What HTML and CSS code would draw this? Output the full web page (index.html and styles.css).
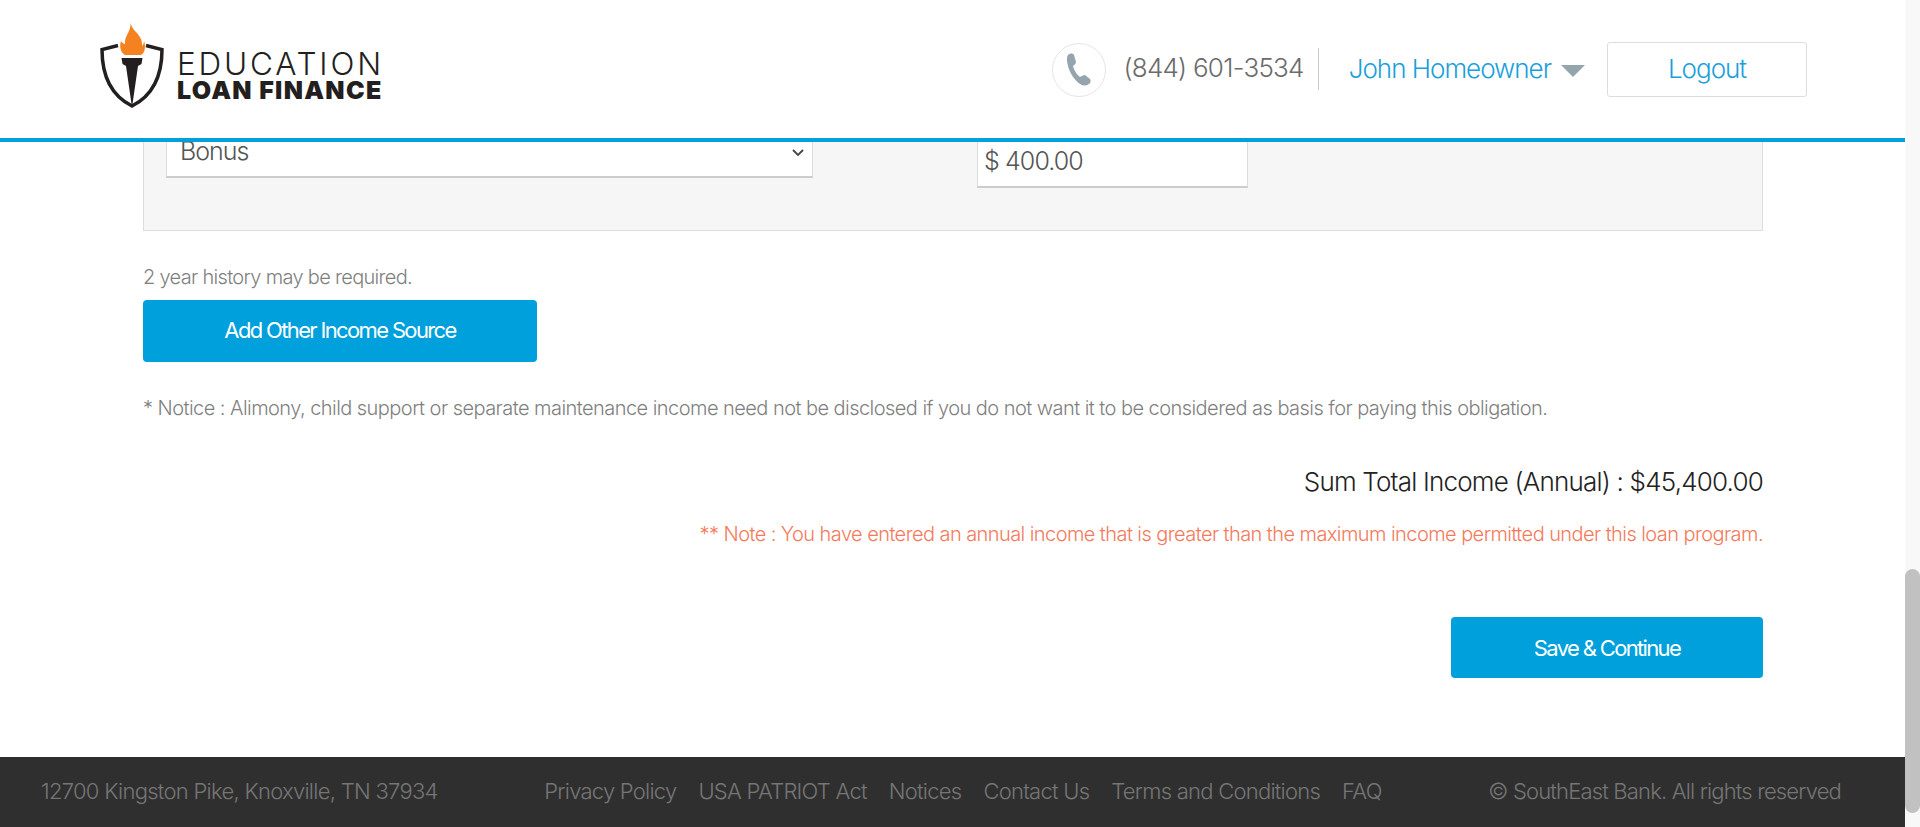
FILE: index.html
```html
<!DOCTYPE html>
<html>
<head>
    <link rel="stylesheet" href="styles.css">
</head>
<body>
    <div class="page">
        <div class="main">
            <div class="header">
                <div class="logo">
                    <svg class="logo-icon" width="65" height="86" viewBox="0 0 65 86">
                        <path d="M18 22.500 L2 26.500 C2 52 10 72 32 83 C54 72 62 52 62 26.500 L46 22.500" fill="none" stroke="#231f20" stroke-width="3.500"/>
                        <path d="M21.500 35 H42.500 L41.500 41 L38 43 L32.500 81 H31.500 L26 43 L22.500 41 Z" fill="#231f20"/>
                        <path d="M30.500 0 C32 7 37 8 41 16 C42 18 42 21 42 23 C43 22 44 20 44 18 C46 23 45 30 41 32 H25 C21 30 19 24 21 18 C22 20 24 21 25 21 C24 13 31 9 30.500 0 Z" fill="#f58220"/>
                    </svg>
                    <div class="logo-text">
                        <div class="logo-top">EDUCATION</div>
                        <div class="logo-bottom">LOAN FINANCE</div>
                    </div>
                </div>
                <div class="header-right">
                    <div class="phone-circle">
                        <svg width="26" height="34" viewBox="0 0 26 34">
                            <path d="M2 2 C4 0 7 0 8 2 L10 9 C10 11 8 12 7 13 C8 17 11 22 14 24 C16 23 17 22 19 22 L24 26 C25 28 25 29 23 31 C20 33 17 33 14 31 C7 26 2 17 1 8 C1 5 1 3 2 2 Z" fill="#95a5ae"/>
                        </svg>
                    </div>
                    <span class="phone">(844) 601-3534</span>
                    <span class="user">John Homeowner</span>
                    <span class="caret"></span>
                    <a class="logout">Logout</a>
                </div>
            </div>

            <div class="content">
                <div class="panel">
                    <div class="select-wrap">
                        <select class="income-type">
                            <option>Bonus</option>
                        </select>
                        <svg class="chevron" width="12" height="8" viewBox="0 0 12 8">
                            <path d="M1 1 L6 6 L11 1" fill="none" stroke="#444" stroke-width="1.800"/>
                        </svg>
                    </div>
                    <input class="amount" type="text" value="$ 400.00">
                </div>

                <p class="hint">2 year history may be required.</p>
                <button class="btn btn-add">Add Other Income Source</button>
                <p class="notice">* Notice : Alimony, child support or separate maintenance income need not be disclosed if you do not want it to be considered as basis for paying this obligation.</p>
                <p class="total">Sum Total Income (Annual) : $45,400.00</p>
                <p class="warning">** Note : You have entered an annual income that is greater than the maximum income permitted under this loan program.</p>
                <div class="actions">
                    <button class="btn btn-save">Save &amp; Continue</button>
                </div>
            </div>

            <div class="footer">
                <span class="address">12700 Kingston Pike, Knoxville, TN 37934</span>
                <div class="footer-links">
                    <a>Privacy Policy</a>
                    <a>USA PATRIOT Act</a>
                    <a>Notices</a>
                    <a>Contact Us</a>
                    <a>Terms and Conditions</a>
                    <a>FAQ</a>
                </div>
                <span class="copyright">© SouthEast Bank. All rights reserved</span>
            </div>
        </div>

        <div class="scrollbar">
            <div class="scroll-thumb"></div>
        </div>
    </div>
</body>
</html>
```

FILE: styles.css
```css
* {
    box-sizing: border-box;
}

html, body {
    height: 100%;
}

body {
    margin: 0;
    font-family: Inter, "Liberation Sans", Arial, sans-serif;
    font-weight: 300;
    color: #777;
    overflow: hidden;
}

p {
    margin: 0;
}

.page {
    display: flex;
    height: 827px;
}

.main {
    position: relative;
    flex: 1;
    display: flex;
    flex-direction: column;
    overflow: hidden;
}

.header {
    position: absolute;
    top: 0;
    left: 0;
    right: 0;
    z-index: 2;
    height: 142px;
    display: flex;
    justify-content: space-between;
    align-items: center;
    padding: 0 98px 0 100px;
    background: #fff;
    border-bottom: 4px solid #00a0dc;
}

.logo {
    display: flex;
    align-items: flex-start;
    height: 86px;
    margin-top: -6px;
}

.logo-text {
    margin-left: 12px;
    padding-top: 26px;
    color: #231f20;
}

.logo-top {
    font-size: 31.500px;
    line-height: 29px;
    font-weight: 300;
    letter-spacing: 2.800px;
}

.logo-bottom {
    font-size: 25px;
    line-height: 25px;
    font-weight: 900;
    letter-spacing: 1.300px;
}

.header-right {
    display: flex;
    align-items: center;
}

.phone-circle {
    width: 54px;
    height: 54px;
    display: flex;
    justify-content: center;
    align-items: center;
    border: 1px solid #e5e5e5;
    border-radius: 50%;
    margin-right: 17px;
    margin-top: 2px;
}

.phone {
    font-size: 26px;
    letter-spacing: -0.750px;
    color: #6b6b6b;
    padding: 0 14px 2px 0;
    line-height: 40px;
    border-right: 1px solid #ccc;
}

.user {
    font-size: 26px;
    letter-spacing: -1px;
    color: #1a9fdc;
    margin-left: 30px;
    padding-bottom: 2px;
}

.caret {
    width: 0;
    height: 0;
    margin-left: 10px;
    margin-top: 3px;
    border-left: 12px solid transparent;
    border-right: 12px solid transparent;
    border-top: 12px solid #95a5ae;
}

.logout {
    width: 200px;
    height: 55px;
    display: flex;
    justify-content: center;
    align-items: center;
    margin-left: 22px;
    padding-bottom: 2px;
    font-size: 26px;
    letter-spacing: -1px;
    color: #1a9fdc;
    border: 1px solid #ddd;
    border-radius: 3px;
}

.content {
    flex: 1;
    padding: 101px 142px 0 143px;
}

.panel {
    display: flex;
    align-items: flex-start;
    gap: 164px;
    height: 130px;
    padding: 29px 22px 0 22px;
    background: #f6f6f6;
    border: 1px solid #ddd;
}

.select-wrap {
    position: relative;
    width: 647px;
}

.income-type {
    display: block;
    width: 100%;
    height: 47px;
    padding: 0 13px 6px;
    appearance: none;
    font-family: inherit;
    font-weight: 300;
    font-size: 25px;
    letter-spacing: -1px;
    color: #555;
    background: #fff;
    border: 1px solid #ddd;
    border-bottom: 2px solid #ccc;
    border-radius: 0;
}

.chevron {
    position: absolute;
    right: 9px;
    top: 18px;
}

.amount {
    width: 271px;
    height: 52px;
    margin-top: 5px;
    padding: 0 6px 2px;
    font-family: inherit;
    font-weight: 300;
    font-size: 25px;
    letter-spacing: -0.900px;
    color: #555;
    background: #fff;
    border: 1px solid #ddd;
    border-bottom: 2px solid #ccc;
}

.hint {
    margin-top: 34px;
    font-size: 20px;
    line-height: 24px;
    letter-spacing: -0.680px;
    color: #7f7f7f;
}

.btn {
    display: block;
    height: 62px;
    font-family: inherit;
    font-weight: 400;
    font-size: 22px;
    letter-spacing: -1.650px;
    color: #fff;
    background: #00a0dc;
    border: none;
    border-radius: 4px;
}

.btn-add {
    width: 394px;
    margin-top: 11px;
    padding-bottom: 3px;
}

.notice {
    margin-top: 32px;
    font-size: 20px;
    line-height: 28px;
    letter-spacing: -0.545px;
    color: #7f7f7f;
}

.total {
    margin-top: 43px;
    font-size: 26px;
    line-height: 34px;
    letter-spacing: -0.800px;
    color: #222;
    text-align: right;
}

.warning {
    margin-top: 22px;
    font-size: 20px;
    line-height: 26px;
    letter-spacing: -0.570px;
    color: #f47a5c;
    text-align: right;
}

.actions {
    display: flex;
    justify-content: flex-end;
    margin-top: 70px;
}

.btn-save {
    width: 312px;
    height: 61px;
}

.footer {
    height: 70px;
    display: flex;
    justify-content: space-between;
    align-items: center;
    padding: 0 64px 2px 41px;
    font-size: 22px;
    letter-spacing: -0.750px;
    color: #767676;
    background: #2f2f2f;
}

.footer-links {
    display: flex;
    gap: 22px;
}

.address {
    letter-spacing: -0.720px;
}

.copyright {
    letter-spacing: -0.830px;
}

.scrollbar {
    position: relative;
    width: 15px;
    background: #f8f8f8;
}

.scroll-thumb {
    position: absolute;
    top: 569px;
    left: 0;
    width: 15px;
    height: 244px;
    background: #c1c1c1;
    border-radius: 8px;
}
```
